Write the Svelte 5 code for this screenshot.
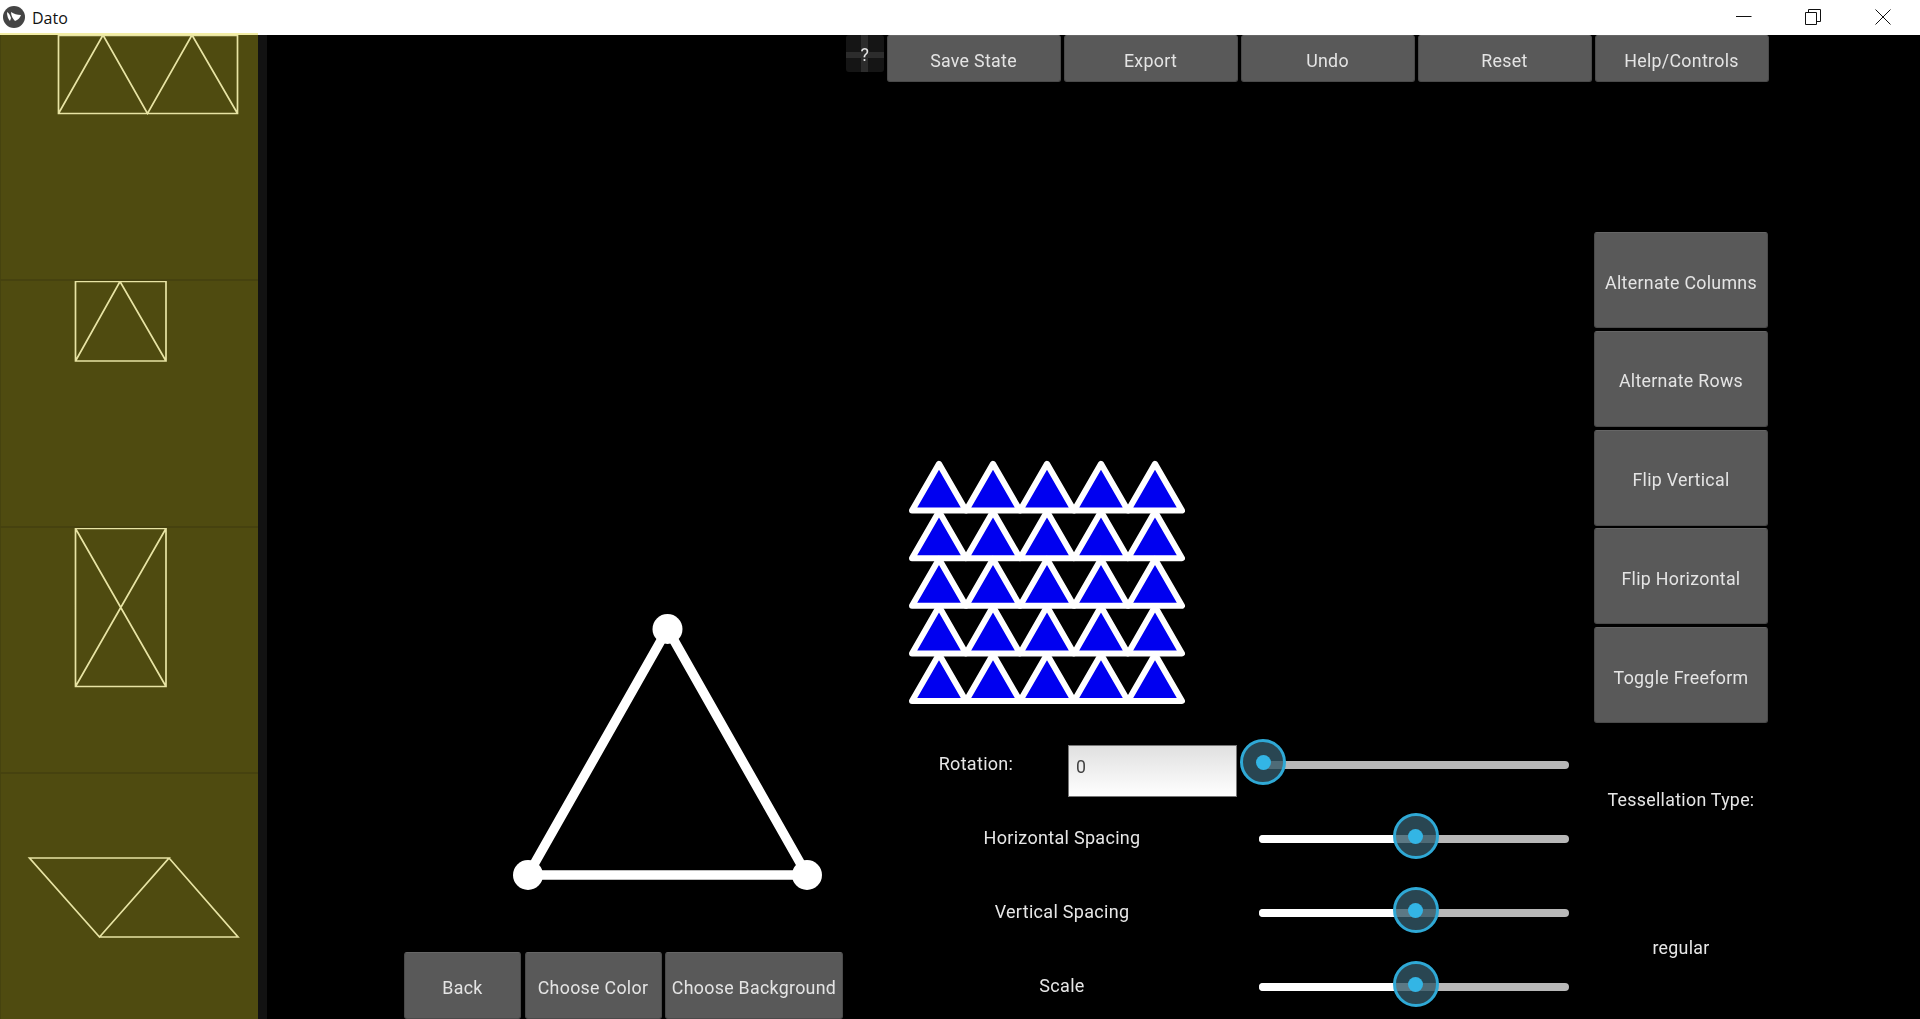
<script>
  const topButtons = ['Save State', 'Export', 'Undo', 'Reset', 'Help/Controls'];
  const sideButtons = ['Alternate Columns', 'Alternate Rows', 'Flip Vertical', 'Flip Horizontal', 'Toggle Freeform'];
  const sliders = [
    { label: 'Horizontal Spacing', value: 50 },
    { label: 'Vertical Spacing', value: 50 },
    { label: 'Scale', value: 50 }
  ];
  const cols = [0, 1, 2, 3, 4];
  const rows = [0, 1, 2, 3, 4];
  function tri(c, r) {
    const x = 12 + c * 54;
    const y = 60.6 + r * 47.6;
    return `${x},${y} ${x + 27},${y - 46.8} ${x + 54},${y}`;
  }
</script>

<div class="window">
  <header class="titlebar">
    <svg class="logo" viewBox="0 0 24 24" width="24" height="24">
      <circle cx="12" cy="12" r="11" fill="#444" />
      <path d="M5 7c2 1 3 3 4 6l-1 3c-2-2-3-5-3-9zM9 7c3 2 6 3 10 3-1 3-3 5-6 6-2-2-4-5-4-9z" fill="#fff" />
    </svg>
    <span class="title">Dato</span>
    <div class="controls">
      <svg viewBox="0 0 16 16" width="16" height="16"><path d="M0 7.500H15.500" stroke="#111" fill="none" /></svg>
      <svg viewBox="0 0 16 16" width="16" height="16"><path d="M.5 3.500H11.500V15.500H.5zM3.500 3.500V.5H15.500V12.500H11.500" stroke="#111" fill="none" /></svg>
      <svg viewBox="0 0 16 16" width="16" height="16"><path d="M.5.5L15.500 15.500M15.500.5L.5 15.500" stroke="#111" fill="none" /></svg>
    </div>
    <i class="accent"></i>
  </header>

  <div class="body">
    <aside class="sidebar">
      <div class="cell first">
        <svg viewBox="0 0 258 80" width="258" height="80"><path d="M58.500 0V78.500H237.500V0M58.500 0.500H237.500M58.500 78.500L103 0L147.500 78.500L192 0L237.500 78.500" /></svg>
      </div>
      <div class="cell">
        <svg viewBox="0 0 258 84" width="258" height="84"><path d="M75.500 0.500H166V80H75.500zM75.500 80L120 0.500L166 80" /></svg>
      </div>
      <div class="cell">
        <svg viewBox="0 0 258 164" width="258" height="164"><path d="M75.500 0.500H166V158.500H75.500zM75.500 0.500L166 158.500M166 0.500L75.500 158.500" /></svg>
      </div>
      <div class="cell last">
        <svg viewBox="0 0 258 82" width="258" height="82"><path d="M29.500 1H169L99.500 80zM169 1L238 80H99.500" /></svg>
      </div>
    </aside>

    <section class="editor">
      <svg class="shape" viewBox="0 0 340 300" width="340" height="300">
        <path d="M167.500 29L28 275H307z" fill="none" stroke="#fff" stroke-width="9.500" />
        <circle cx="167.500" cy="29" r="15" fill="#fff" />
        <circle cx="28" cy="275" r="15" fill="#fff" />
        <circle cx="307" cy="275" r="15" fill="#fff" />
      </svg>
      <div class="bottom-buttons">
        <button class="back">Back</button>
        <button class="color">Choose Color</button>
        <button class="bg">Choose Background</button>
      </div>
    </section>

    <section class="tools">
      <div class="topbar">
        <button class="help">?</button>
        {#each topButtons as b}
          <button class="top">{b}</button>
        {/each}
      </div>
      <div class="workspace">
        <div class="center">
          <svg class="mosaic" viewBox="0 0 290 262" width="290" height="262">
            {#each rows as r}
              {#each cols as c}
                <polygon points={tri(c, r)} fill="#0000f0" stroke="#fff" stroke-width="6" stroke-linejoin="round" />
              {/each}
            {/each}
          </svg>
          <div class="row rotation">
            <span class="label rot-label">Rotation:</span>
            <div class="input">0</div>
            <div class="slider rot-slider">
              <div class="track"></div>
              <div class="knob" style="left: -1px"><i></i></div>
            </div>
          </div>
          {#each sliders as s}
            <div class="row">
              <span class="label wide">{s.label}</span>
              <div class="slider">
                <div class="track"></div>
                <div class="fill" style="width: {s.value}%"></div>
                <div class="knob" style="left: calc({s.value}% - 21px)"><i></i></div>
              </div>
            </div>
          {/each}
        </div>
        <div class="right">
          <div class="stack">
            {#each sideButtons as b}
              <button class="side">{b}</button>
            {/each}
          </div>
          <div class="note first-note">Tessellation Type:</div>
          <div class="note">regular</div>
        </div>
      </div>
    </section>
  </div>
</div>

<style>
  :global(body) { margin: 0; background: #000; overflow: hidden; }
  .window { width: 1920px; height: 1019px; overflow: hidden; display: flex; flex-direction: column; font-family: Roboto, sans-serif; color: #e6e6e6; }
  .titlebar { position: relative; flex: 0 0 35px; background: #fff; display: flex; align-items: center; color: #111; }
  .logo { margin: 0 0 1px 2px; }
  .title { margin-left: 6px; font: 16px "Open Sans", sans-serif; }
  .controls { margin-left: auto; display: flex; gap: 54px; padding: 0 29px 2px 0; align-items: center; }
  .controls svg:first-child { margin-right: -1px; }
  .accent { position: absolute; left: 0; bottom: 0; width: 258px; height: 2px; background: #f3eea6; }

  .body { flex: 1; display: flex; min-height: 0; background: #000; }
  .sidebar { flex: 0 0 267px; display: flex; flex-direction: column; background: #121212; }
  .cell { flex: 0 0 246.500px; width: 258px; box-sizing: border-box; background: #4f4b10; border-left: 1px solid #46430f; border-top: 2px solid #46420f; overflow: hidden; }
  .cell.first { flex-basis: 244px; border-top: 0; }
  .cell.last { flex-basis: 247px; padding-top: 83px; }
  .cell svg { display: block; margin-left: -1px; filter: blur(0.3px); }
  .cell path { fill: none; stroke: #e8e4a4; stroke-width: 1.700; }

  .editor { flex: 0 0 579px; display: flex; flex-direction: column; justify-content: flex-end; }
  .shape { margin: 0 0 52px 233px; display: block; filter: blur(0.3px); }
  .bottom-buttons { display: flex; gap: 3.500px; margin-left: 137px; height: 67px; }
  .back { width: 117px; }
  .color { width: 137px; }
  .bg { width: 178px; }

  button { margin: 0; padding: 4px 0 0; font: 17.800px Roboto, sans-serif; letter-spacing: 0.3px; color: #e4e4e4; background: #595959; border: 1px solid #4a4a4a; border-top-color: #666; border-radius: 3px; box-sizing: border-box; filter: blur(0.35px); }

  .tools { flex: 1; display: flex; flex-direction: column; min-width: 0; }
  .topbar { flex: 0 0 47px; display: flex; gap: 3px; }
  .top { width: 174px; }
  .help { flex: 0 0 37.500px; height: 37px; padding: 2px 0 0; border: 0; background:
    linear-gradient(#2c2c2c, #2c2c2c) 0 17px / 100% 6px no-repeat,
    linear-gradient(#2c2c2c, #2c2c2c) 15px 0 / 7px 100% no-repeat,
    #151515; }
  .workspace { flex: 1; display: flex; min-height: 0; }
  .center { flex: 0 0 748px; }
  .mosaic { display: block; margin: 368px 0 13px 54px; filter: blur(0.3px); }
  .row { height: 74px; display: flex; align-items: center; }
  .label { padding-top: 3px; font-size: 18px; letter-spacing: 0.3px; text-align: center; filter: blur(0.35px); }
  .wide { width: 224px; margin-left: 104px; margin-right: 84px; }
  .rot-label { width: 100px; margin: 0 42px 0 80px; }
  .input { box-sizing: border-box; width: 169px; height: 52px; margin: 17px 4px 0 0; padding: 10px 0 0 7px; font-size: 17.800px; color: #444; background: linear-gradient(#e0e0e0, #fff); border: 1px solid #777; filter: blur(0.35px); }
  .slider { position: relative; width: 311px; height: 46px; }
  .rot-slider { width: 328px; }
  .track { position: absolute; left: 1px; right: 0; top: 22px; height: 8px; border-radius: 4px; background: #b8b8b8; }
  .rot-slider .track { left: 18px; }
  .fill { position: absolute; left: 1px; top: 22px; height: 8px; border-radius: 4px; background: #fff; }
  .knob { position: absolute; top: 0; box-sizing: border-box; width: 46px; height: 46px; border-radius: 50%; border: 3px solid #2fa9d6; background: rgba(51, 88, 102, 0.8); display: flex; align-items: center; justify-content: center; filter: blur(0.3px); }
  .knob i { width: 15px; height: 15px; border-radius: 50%; background: #33b5e5; }

  .right { flex: 0 0 174px; }
  .stack { display: flex; flex-direction: column; gap: 2.750px; margin-top: 150px; }
  .side { height: 96px; }
  .note { height: 148px; padding-top: 5px; box-sizing: border-box; display: flex; align-items: center; justify-content: center; font-size: 17.800px; letter-spacing: 0.3px; filter: blur(0.35px); }
</style>
